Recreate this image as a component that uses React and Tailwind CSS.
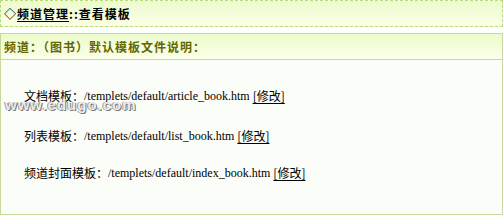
export default function App() {
  const cjk = { fontFamily: '"Liberation Serif", "Noto Sans CJK SC", serif' };
  const rows = [
    { label: "文档模板：", path: "/templets/default/article_book.htm", mt: "mt-0" },
    { label: "列表模板：", path: "/templets/default/list_book.htm", mt: "mt-[22px]" },
    { label: "频道封面模板：", path: "/templets/default/index_book.htm", mt: "mt-[19px]" },
  ];
  return (
    <div className="w-[503px] h-[216px] bg-white relative text-[12px] text-black font-['Liberation_Serif','Noto_Sans_CJK_SC',serif]">
      <div className="w-[503px] h-[27px] border border-dashed border-[#b5dc78] bg-gradient-to-b from-[#ecfbcc] to-[#fbffe8] flex items-center pl-[3px] font-bold text-[12px] leading-none tracking-[1px] font-['Noto_Sans_CJK_SC',sans-serif]">
        <span>◇</span>
        <span className="underline underline-offset-2">频道管理</span>
        <span>::查看模板</span>
      </div>
      <div className="mt-[6px] w-[503px] border border-[#c6da9e]">
        <div className="h-[26px] bg-gradient-to-b from-[#ecfbcc] to-[#fbffe8] border-b border-[#c6da9e] flex items-center pl-[3px] font-bold text-[#666600] leading-none tracking-[1px] font-['Noto_Sans_CJK_SC',sans-serif]">
          频道：（图书）默认模板文件说明：
        </div>
        <div className="bg-[#fbfef8] h-[154px] pt-[27px] pl-[23px] flex flex-col">
          {rows.map((r) => (
            <div key={r.label} className={`${r.mt} h-[18px] flex items-center whitespace-nowrap`} style={cjk}>
              <span className="font-['Noto_Sans_CJK_SC',sans-serif]">{r.label}</span>
              <span>{r.path}</span>
              <span className="ml-[3px] underline underline-offset-2 font-['Noto_Sans_CJK_SC',sans-serif]">[修改]</span>
            </div>
          ))}
        </div>
      </div>
      <div className="absolute left-[5px] top-[97px] text-[15px] font-bold leading-none text-[#ececec] tracking-[1px] font-['Liberation_Sans',sans-serif] [text-shadow:1px_1px_0_#7a7a7a,-1px_0_0_#9a9a9a]">
        www.edugo.com
      </div>
    </div>
  );
}
